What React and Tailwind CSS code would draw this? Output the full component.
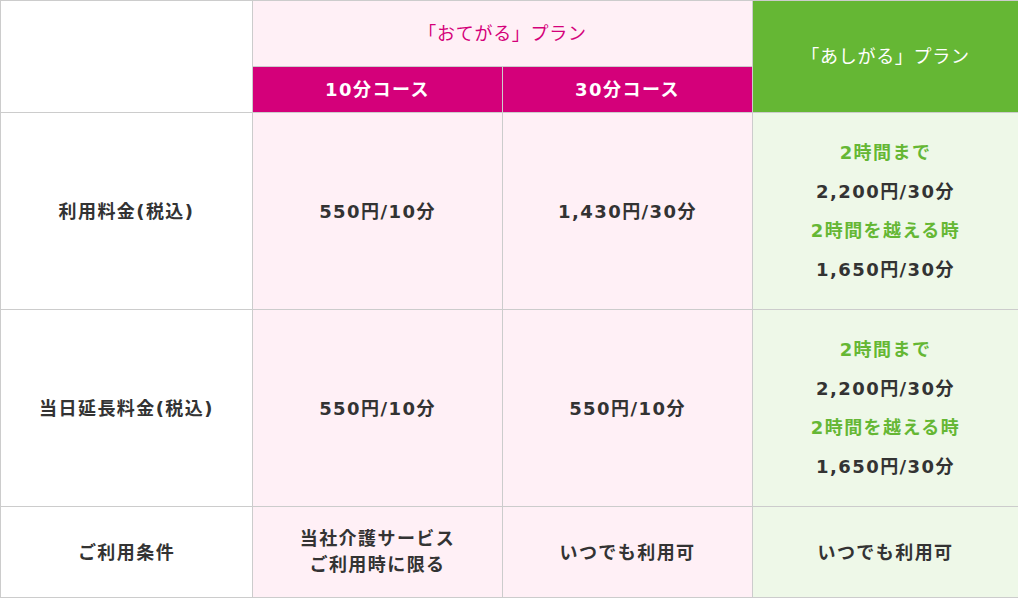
import React from 'react';

const cell = 'border border-[#cccccc] text-center align-middle';

const PriceBlock = () => (
  <div className="flex flex-col gap-[13px] leading-[26px]">
    <p className="text-[#65b734]">2時間まで</p>
    <p>2,200円/30分</p>
    <p className="text-[#65b734]">2時間を越える時</p>
    <p>1,650円/30分</p>
  </div>
);

export default function App() {
  return (
    <div className="w-[1018px] h-[598px] bg-white text-[#333333] text-[18px] font-bold tracking-[0.08em] font-['DejaVu_Sans','Noto_Sans_CJK_JP',sans-serif]">
      <table className="w-[1018px] border-collapse table-fixed">
        <colgroup>
          <col className="w-[252px]" />
          <col className="w-[250px]" />
          <col className="w-[250px]" />
          <col className="w-[266px]" />
        </colgroup>
        <thead>
          <tr className="h-[66px]">
            <th rowSpan={2} className={`${cell} bg-white`}></th>
            <th colSpan={2} className={`${cell} bg-[#fff0f6] text-[#d4007a] font-normal tracking-[0.04em]`}>
              「おてがる」プラン
            </th>
            <th rowSpan={2} className={`${cell} bg-[#65b734] text-white font-normal tracking-[0.04em]`}>
              「あしがる」プラン
            </th>
          </tr>
          <tr className="h-[46px]">
            <th className={`${cell} bg-[#d4007a] text-white`}>10分コース</th>
            <th className={`${cell} bg-[#d4007a] text-white`}>30分コース</th>
          </tr>
        </thead>
        <tbody>
          <tr className="h-[197px]">
            <td className={`${cell} bg-white`}>利用料金(税込)</td>
            <td className={`${cell} bg-[#fff0f6]`}>550円/10分</td>
            <td className={`${cell} bg-[#fff0f6]`}>1,430円/30分</td>
            <td className={`${cell} bg-[#eef8e8]`}>
              <PriceBlock />
            </td>
          </tr>
          <tr className="h-[197px]">
            <td className={`${cell} bg-white`}>当日延長料金(税込)</td>
            <td className={`${cell} bg-[#fff0f6]`}>550円/10分</td>
            <td className={`${cell} bg-[#fff0f6]`}>550円/10分</td>
            <td className={`${cell} bg-[#eef8e8]`}>
              <PriceBlock />
            </td>
          </tr>
          <tr className="h-[91px]">
            <td className={`${cell} bg-white`}>ご利用条件</td>
            <td className={`${cell} bg-[#fff0f6] leading-[26px]`}>
              当社介護サービス
              <br />
              ご利用時に限る
            </td>
            <td className={`${cell} bg-[#fff0f6]`}>いつでも利用可</td>
            <td className={`${cell} bg-[#eef8e8]`}>いつでも利用可</td>
          </tr>
        </tbody>
      </table>
    </div>
  );
}
